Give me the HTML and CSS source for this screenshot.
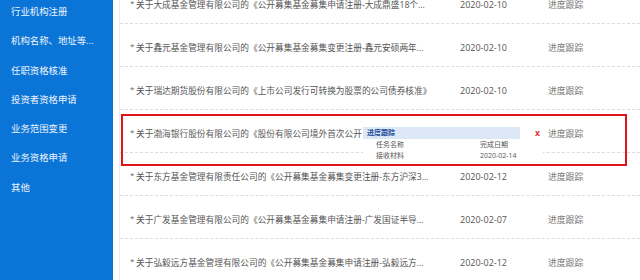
FILE: index.html
```html
<!DOCTYPE html>
<html lang="zh-CN">
<head>
<meta charset="utf-8">
<title>业务办理进度</title>
<link rel="stylesheet" href="styles.css">
</head>
<body>
<div class="page">
  <aside class="sidebar">
    <ul class="menu">
      <li>行业机构注册</li>
      <li>机构名称、地址等...</li>
      <li>任职资格核准</li>
      <li>投资者资格申请</li>
      <li>业务范围变更</li>
      <li>业务资格申请</li>
      <li>其他</li>
    </ul>
  </aside>
  <main class="content">
    <ul class="list">
      <li class="row"><span class="bullet">*</span><span class="title">关于大成基金管理有限公司的《公开募集基金募集申请注册-大成鼎盛18个...</span><span class="date">2020-02-10</span><span class="action">进度跟踪</span></li>
      <li class="row"><span class="bullet">*</span><span class="title">关于鑫元基金管理有限公司的《公开募集基金募集变更注册-鑫元安硕两年...</span><span class="date">2020-02-10</span><span class="action">进度跟踪</span></li>
      <li class="row"><span class="bullet">*</span><span class="title">关于瑞达期货股份有限公司的《上市公司发行可转换为股票的公司债券核准》</span><span class="date">2020-02-10</span><span class="action">进度跟踪</span></li>
      <li class="row is-open"><span class="bullet">*</span><span class="title">关于渤海银行股份有限公司的《股份有限公司境外首次公开</span><span class="date"></span><span class="action">进度跟踪</span>
        <div class="popup">
          <div class="popup-head">进度跟踪</div>
          <span class="popup-close">x</span>
          <div class="popup-body">
            <span>任务名称</span><span>完成日期</span>
            <span>接收材料</span><span>2020-02-14</span>
          </div>
        </div>
        <div class="mark"></div>
      </li>
      <li class="row"><span class="bullet">*</span><span class="title">关于东方基金管理有限责任公司的《公开募集基金募集变更注册-东方沪深3...</span><span class="date">2020-02-12</span><span class="action">进度跟踪</span></li>
      <li class="row"><span class="bullet">*</span><span class="title">关于广发基金管理有限公司的《公开募集基金募集申请注册-广发国证半导...</span><span class="date">2020-02-07</span><span class="action">进度跟踪</span></li>
      <li class="row"><span class="bullet">*</span><span class="title">关于弘毅远方基金管理有限公司的《公开募集基金募集申请注册-弘毅远方...</span><span class="date">2020-02-12</span><span class="action">进度跟踪</span></li>
    </ul>
  </main>
</div>
</body>
</html>
```

FILE: styles.css
```css
* { box-sizing: border-box; }
html, body { margin: 0; padding: 0; background: #fff; }
body {
  width: 640px;
  height: 280px;
  overflow: hidden;
  font-family: "Open Sans", "Noto Sans CJK SC", sans-serif;
  text-spacing-trim: space-all;
}
.page {
  display: flex;
  height: 280px;
}
.sidebar {
  width: 113px;
  flex: none;
  background: #0b74d7;
}
.menu {
  list-style: none;
  margin: 0;
  padding: 4px 0 0 11px;
}
.menu li {
  height: 29.3px;
  line-height: 16px;
  font-size: 9.4px;
  color: #eef5fd;
  white-space: nowrap;
}
.content {
  flex: 1;
  margin-left: 6px;
  border-left: 1px solid #e6ebf2;
  overflow: hidden;
}
.list {
  list-style: none;
  margin: -19px 0 0 0;
  padding: 0;
}
.row {
  position: relative;
  display: flex;
  align-items: flex-start;
  height: 43px;
  padding: 18px 0 0 10px;
  border-bottom: 1px dashed #dcdcdc;
  font-size: 8.7px;
  line-height: 12px;
  color: #555;
}
.bullet {
  width: 6px;
  flex: none;
  font-size: 8px;
  line-height: 8px;
  color: #666;
}
.title {
  width: 324px;
  flex: none;
  white-space: nowrap;
  overflow: hidden;
}
.date {
  width: 88px;
  flex: none;
  font-size: 9px;
  color: #555;
}
.action {
  color: #777;
  font-size: 8.8px;
}
.popup {
  position: absolute;
  left: 243px;
  top: 17px;
  width: 180px;
  height: 36px;
  background: #fff;
}
.popup-head {
  width: 157px;
  height: 12px;
  padding-left: 4px;
  background: #dde8f6;
  color: #1f4e9c;
  font-weight: bold;
  font-size: 7px;
  line-height: 12px;
}
.popup-close {
  position: absolute;
  left: 172px;
  top: 0;
  color: #e3141c;
  font-weight: bold;
  font-size: 9px;
  line-height: 12px;
  font-family: "Liberation Sans", sans-serif;
}
.popup-body {
  display: grid;
  grid-template-columns: 104px auto;
  padding-left: 13px;
  font-size: 7px;
  line-height: 11px;
  color: #555;
}
.mark {
  position: absolute;
  left: 1px;
  right: 13px;
  top: 4px;
  height: 52px;
  border: 2px solid #e0121c;
  pointer-events: none;
}
```
